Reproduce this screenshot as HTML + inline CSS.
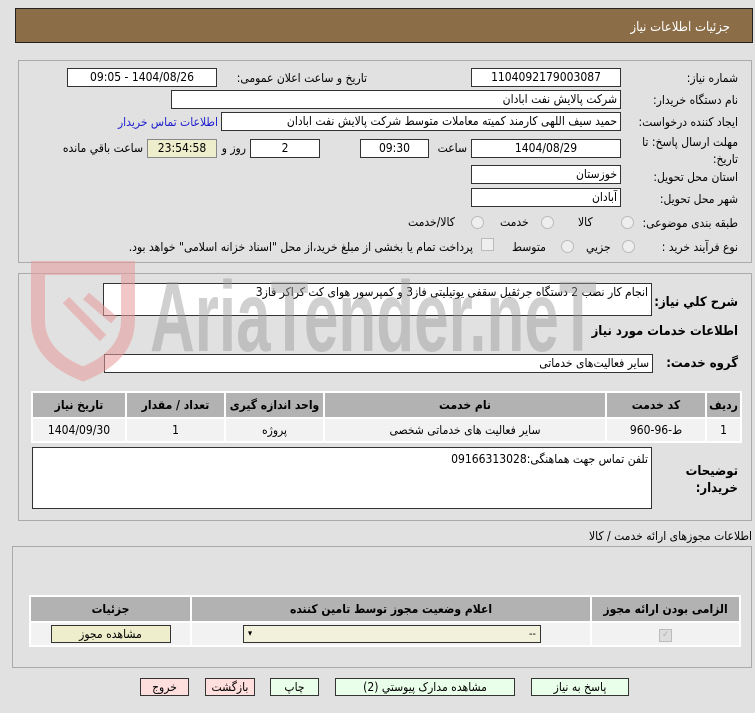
<!DOCTYPE html>
<html><head><meta charset="utf-8"><style>
body{margin:0;width:755px;height:713px;background:#e1e1e1;font-family:"DejaVu Sans Condensed","DejaVu Sans",sans-serif;font-size:12px;color:#000;position:relative;overflow:hidden}
.a{position:absolute;white-space:nowrap}
.r{direction:rtl;text-align:right}
.in{position:absolute;background:#fff;border:1px solid #333;box-sizing:border-box;height:19px;line-height:17px;font-size:12px;direction:rtl;padding:0 3px;white-space:nowrap;overflow:hidden}
.c{text-align:center}
.panel{position:absolute;border:1px solid #aaa;box-sizing:border-box}
.rad{position:absolute;width:11px;height:11px;border-radius:50%;border:1px solid #bbb;background:#eee}
table{position:absolute;border-collapse:separate;border-spacing:2px;background:#fff;direction:rtl;font-size:12px}
th{background:#b2b2b2;font-weight:bold;height:22px;white-space:nowrap}
td{background:#f2f2f2;text-align:center;height:20px;white-space:nowrap}
.btn{position:absolute;border:1px solid #333;box-sizing:border-box;height:18px;line-height:16px;text-align:center;background:#eaffea;font-size:12px}
</style></head><body>
<div class="a" style="left:15px;top:8px;width:738px;height:35px;background:#8b6d47;border:1px solid #222;box-sizing:border-box"></div>
<div class="a" style="right:25px;top:20px;color:#fff;font-size:13px">جزئیات اطلاعات نیاز</div>

<div class="panel" style="left:18px;top:60px;width:734px;height:203px"></div>
<div class="a r" style="right:17px;top:71px">شماره نیاز:</div>
<div class="in c" style="left:471px;top:68px;width:150px">1104092179003087</div>
<div class="a r" style="left:222px;top:71px;width:145px">تاریخ و ساعت اعلان عمومی:</div>
<div class="in c" style="left:67px;top:68px;width:150px">1404/08/26 - 09:05</div>
<div class="a r" style="right:17px;top:93px">نام دستگاه خریدار:</div>
<div class="in" style="left:171px;top:90px;width:450px">شرکت پالایش نفت ابادان</div>
<div class="a r" style="right:17px;top:115px">ایجاد کننده درخواست:</div>
<div class="in" style="left:221px;top:112px;width:400px">حمید سیف اللهی کارمند کمیته معاملات متوسط  شرکت پالایش نفت ابادان</div>
<div class="a r" style="left:110px;top:115px;width:108px;color:#2020d0">اطلاعات تماس خریدار</div>
<div class="a r" style="right:17px;top:135px">مهلت ارسال پاسخ: تا</div>
<div class="a r" style="right:17px;top:152px">تاریخ:</div>
<div class="in c" style="left:471px;top:139px;width:150px">1404/08/29</div>
<div class="a r" style="left:433px;top:141px;width:34px">ساعت</div>
<div class="in c" style="left:360px;top:139px;width:69px">09:30</div>
<div class="in c" style="left:250px;top:139px;width:70px">2</div>
<div class="a r" style="left:222px;top:141px;width:24px">روز و</div>
<div class="in c" style="left:147px;top:139px;width:70px;background:#eeeecc;border-color:#888">23:54:58</div>
<div class="a r" style="left:50px;top:141px;width:93px">ساعت باقي مانده</div>
<div class="a r" style="right:17px;top:170px">استان محل تحویل:</div>
<div class="in" style="left:471px;top:165px;width:150px">خوزستان</div>
<div class="a r" style="right:17px;top:192px">شهر محل تحویل:</div>
<div class="in" style="left:471px;top:188px;width:150px">آبادان</div>
<div class="a r" style="right:17px;top:216px">طبقه بندی موضوعی:</div>
<div class="rad" style="left:621px;top:216px"></div><div class="a" style="left:578px;top:215px">کالا</div>
<div class="rad" style="left:541px;top:216px"></div><div class="a" style="left:500px;top:215px">خدمت</div>
<div class="rad" style="left:471px;top:216px"></div><div class="a" style="left:408px;top:215px">کالا/خدمت</div>
<div class="a r" style="right:17px;top:240px">نوع فرآیند خرید :</div>
<div class="rad" style="left:622px;top:240px"></div><div class="a" style="left:586px;top:240px">جزیي</div>
<div class="rad" style="left:561px;top:240px"></div><div class="a" style="left:512px;top:240px">متوسط</div>
<div class="a" style="left:481px;top:238px;width:11px;height:11px;border:1px solid #bbb;background:#eee"></div>
<div class="a r" style="left:88px;top:240px;width:385px">پرداخت تمام یا بخشی از مبلغ خرید،از محل "اسناد خزانه اسلامی" خواهد بود.</div>

<div class="panel" style="left:18px;top:273px;width:734px;height:248px"></div>
<div class="a r" style="right:17px;top:295px;font-weight:bold;font-size:13px">شرح كلي نياز:</div>
<div class="in" style="left:103px;top:283px;width:549px;height:33px;line-height:16px">انجام کار نصب 2 دستگاه جرثقیل سقفی یوتیلیتی فاز3 و کمپرسور هوای کت کراکر فاز3</div>
<div class="a r" style="right:17px;top:324px;font-weight:bold;font-size:13px">اطلاعات خدمات مورد نیاز</div>
<div class="a r" style="right:17px;top:356px;font-weight:bold;font-size:13px">گروه خدمت:</div>
<div class="in" style="left:104px;top:354px;width:549px">سایر فعالیت‌های خدماتی</div>

<svg class="a" style="left:28px;top:258px;opacity:.55" width="115" height="125"><path d="M10 10 L100 10 L100 62 Q100 98 55 116 Q10 98 10 62 Z" fill="none" stroke="#e89a9a" stroke-width="14"/><path d="M38 42 L75 80 M58 38 L86 62" stroke="#e89a9a" stroke-width="9"/></svg>
<div class="a" style="left:150px;top:262px;color:#999;opacity:.45;font-size:100px;font-weight:bold;line-height:110px;font-family:'Liberation Sans',sans-serif;transform:scaleX(0.62);transform-origin:left top">AriaTender.neT</div>

<table style="left:31px;top:391px;width:711px">
<tr><th style="width:31px">ردیف</th><th style="width:96px">کد خدمت</th><th style="width:278px">نام خدمت</th><th style="width:95px">واحد اندازه گیری</th><th style="width:95px">تعداد / مقدار</th><th>تاریخ نیاز</th></tr>
<tr><td>1</td><td>ط-96-960</td><td>سایر فعالیت های خدماتی شخصی</td><td>پروژه</td><td>1</td><td>1404/09/30</td></tr>
</table>
<div class="a r" style="right:17px;top:463px;font-weight:bold;font-size:13px;line-height:17px">توضیحات<br>خریدار:</div>
<div class="in" style="left:32px;top:447px;width:620px;height:62px;line-height:22px">تلفن تماس جهت هماهنگی:09166313028</div>

<div class="a r" style="right:3px;top:529px">اطلاعات مجوزهای ارائه خدمت / کالا</div>
<div class="panel" style="left:12px;top:546px;width:740px;height:122px"></div>
<table style="left:29px;top:595px;width:712px">
<tr><th style="width:145px">الزامی بودن ارائه مجوز</th><th style="width:396px">اعلام وضعیت مجوز توسط تامین کننده</th><th>جزئیات</th></tr>
<tr><td><span style="display:inline-block;width:11px;height:11px;background:#ddd;border:1px solid #bbb;color:#aaa;font-size:9px;line-height:11px">✓</span></td><td><div style="margin:0 auto 0 50px;width:298px;height:18px;border:1px solid #333;background:#f2f2dc;box-sizing:border-box;text-align:right;line-height:16px;font-size:11px;padding:0 4px;position:relative">--<span style="position:absolute;left:4px;top:0;font-size:9px">▾</span></div></td><td><div style="margin:0 auto;width:120px;height:18px;border:1px solid #333;background:#eeeecc;box-sizing:border-box;line-height:16px">مشاهده مجوز</div></td></tr>
</table>

<div class="btn" style="left:531px;top:678px;width:98px">پاسخ به نیاز</div>
<div class="btn" style="left:335px;top:678px;width:180px">مشاهده مدارک پیوستي (2)</div>
<div class="btn" style="left:270px;top:678px;width:49px">چاپ</div>
<div class="btn" style="left:205px;top:678px;width:50px;background:#ffdede">بازگشت</div>
<div class="btn" style="left:140px;top:678px;width:49px;background:#ffdede">خروج</div>
</body></html>
